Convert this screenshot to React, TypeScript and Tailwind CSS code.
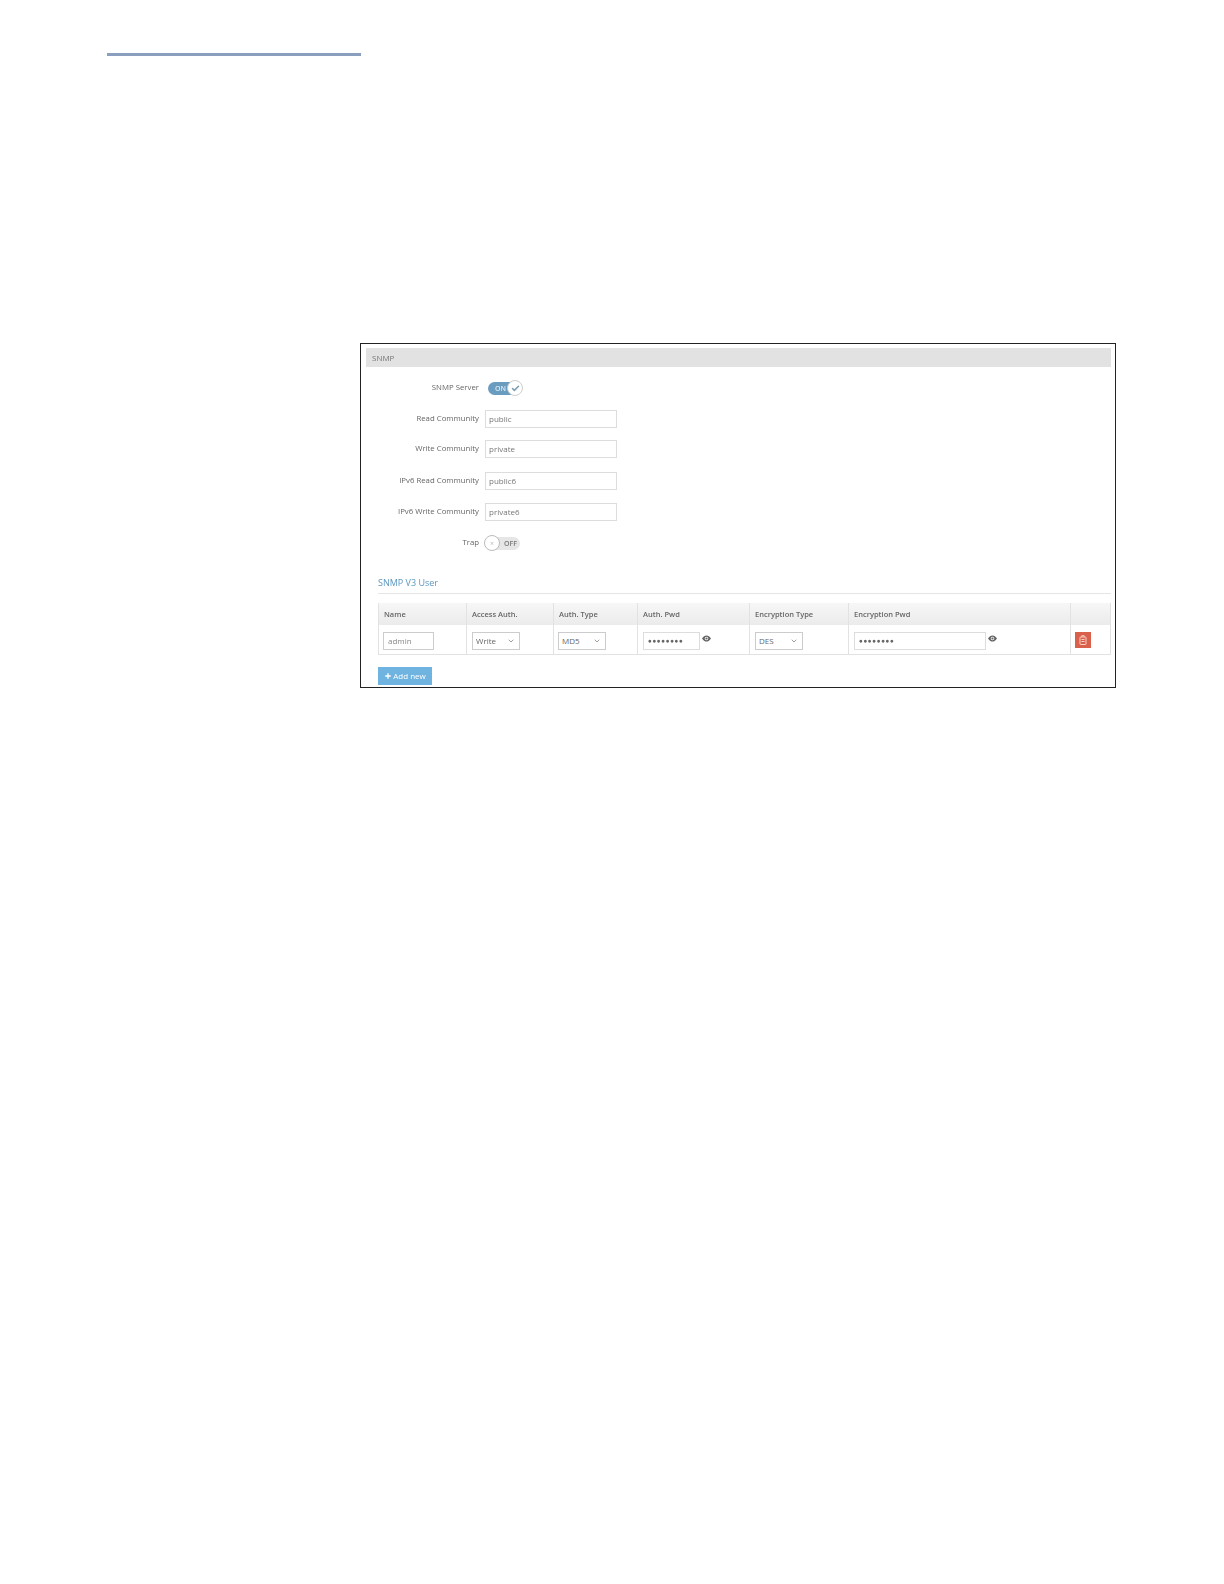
import { ChevronDown, Plus, Check } from "lucide-react";

const communityRows = [
  { label: "Read Community", value: "public", mt: "mt-[14px]" },
  { label: "Write Community", value: "private", mt: "mt-[12px]" },
  { label: "IPv6 Read Community", value: "public6", mt: "mt-[14px]" },
  { label: "IPv6 Write Community", value: "private6", mt: "mt-[13px]" },
];

const FormLabel = ({ children }: { children: string }) => (
  <span className="w-[113px] shrink-0 text-right text-[7.8px] leading-none text-[#666]">
    {children}
  </span>
);

const TableSelect = ({ value, shift }: { value: string; shift?: boolean }) => (
  <div className={`${shift ? "-ml-px" : ""} flex h-[18px] w-[48px] items-center justify-between border border-[#ccc] bg-white pl-[3px] pr-[4px] text-[8px] text-[#666]`}>
    {value}
    <ChevronDown size={8} strokeWidth={2.5} className="text-[#888]" />
  </div>
);

const Dots = () => (
  <span className="pl-[4px] text-[6.5px] tracking-[0.5px] text-[#666]">●●●●●●●●</span>
);

const EyeIcon = () => (
  <svg width="9" height="7" viewBox="0 0 18 14" className="ml-[2px] mt-[3px]">
    <path
      fill="#666"
      fillRule="evenodd"
      d="M0 7C2.5 2.8 5.6.8 9 .8s6.5 2 9 6.2c-2.5 4.2-5.6 6.2-9 6.2S2.500 11.200 0 7Zm9-3.600a3.600 3.600 0 1 0 0 7.200 3.600 3.600 0 0 0 0-7.200Z"
    />
    <circle cx="9" cy="7" r="2.200" fill="#666" />
  </svg>
);

const HeadCell = ({ width, children, last }: { width: string; children?: string; last?: boolean }) => (
  <div className={`${width} flex items-center pl-[5px] pt-[2px] text-[7.5px] font-semibold text-[#666] ${last ? "" : "border-r border-[#e2e2e2]"}`}>
    {children}
  </div>
);

const BodyCell = ({ width, children, last }: { width: string; children?: React.ReactNode; last?: boolean }) => (
  <div className={`${width} flex items-start pl-[5px] pt-[7px] ${last ? "" : "border-r border-[#e2e2e2]"}`}>
    {children}
  </div>
);

export default function App() {
  return (
    <div className="h-[1584px] w-full bg-white pl-[107px] pt-[53px] font-['Open_Sans',sans-serif]">
      <div className="h-[3px] w-[254px] bg-[#8a9fbd]" />
      <div className="ml-[253px] mt-[287px] h-[345px] w-[756px] border border-[#222] px-[5px] pt-[4px]">
        <div className="blur-[0.35px]">
          <div className="flex h-[19px] w-[745px] items-center bg-[#e2e2e2] pl-[6px] text-[8px] text-[#777]">
            SNMP
          </div>

          <div className="mt-[13px] flex h-[16px] items-center">
            <FormLabel>SNMP Server</FormLabel>
            <div className="relative ml-[9px] h-[13px] w-[34px] rounded-full bg-[#6a9cc0]">
              <span className="absolute left-[7px] top-[2px] text-[7px] font-semibold leading-[9px] text-[#dbe8f1]">ON</span>
              <div className="absolute -right-px -top-[1.5px] flex h-[16px] w-[16px] items-center justify-center rounded-full border border-[#ccc] bg-white">
                <Check size={9} strokeWidth={4} className="text-[#7d9bb2]" />
              </div>
            </div>
          </div>

          {communityRows.map(({ label, value, mt }) => (
            <div key={label} className={`${mt} flex h-[18px] items-center`}>
              <FormLabel>{label}</FormLabel>
              <div className="ml-[6px] flex h-[18px] w-[132px] items-center border border-[#ddd] bg-white pl-[3px] text-[8px] text-[#777]">
                {value}
              </div>
            </div>
          ))}

          <div className="mt-[14px] flex h-[16px] items-center">
            <FormLabel>Trap</FormLabel>
            <div className="relative ml-[6px] h-[13px] w-[35px] rounded-full bg-[#e6e6e6]">
              <span className="absolute right-[3px] top-[2px] text-[7px] font-semibold leading-[9px] text-[#777]">OFF</span>
              <div className="absolute -left-px -top-[1.5px] flex h-[16px] w-[16px] items-center justify-center rounded-full border border-[#bbb] bg-white">
                <span className="text-[7px] leading-none text-[#bbb]">×</span>
              </div>
            </div>
          </div>

          <div className="ml-[12px] mt-[25px] w-[733px] border-b border-[#e5e5e5] pb-[4px] text-[9px] leading-[13px] text-[#5a97c0]">
            SNMP V3 User
          </div>

          <div className="ml-[12px] mt-[9px] w-[733px] border-x border-b border-[#e2e2e2]">
            <div className="flex h-[22px] bg-gradient-to-b from-[#f7f7f7] to-[#ebebeb]">
              <HeadCell width="w-[88px]">Name</HeadCell>
              <HeadCell width="w-[87px]">Access Auth.</HeadCell>
              <HeadCell width="w-[84px]">Auth. Type</HeadCell>
              <HeadCell width="w-[112px]">Auth. Pwd</HeadCell>
              <HeadCell width="w-[99px]">Encryption Type</HeadCell>
              <HeadCell width="w-[222px]">Encryption Pwd</HeadCell>
              <HeadCell width="w-[39px]" last />
            </div>
            <div className="flex h-[29px]">
              <BodyCell width="w-[88px]">
                <div className="-ml-px flex h-[18px] w-[51px] items-center border border-[#ccc] pl-[4px] text-[8px] text-[#888]">admin</div>
              </BodyCell>
              <BodyCell width="w-[87px]"><TableSelect value="Write" /></BodyCell>
              <BodyCell width="w-[84px]"><TableSelect value="MD5" shift /></BodyCell>
              <BodyCell width="w-[112px]">
                <div className="flex h-[18px] w-[57px] items-center border border-[#ddd]"><Dots /></div>
                <EyeIcon />
              </BodyCell>
              <BodyCell width="w-[99px]"><TableSelect value="DES" /></BodyCell>
              <BodyCell width="w-[222px]">
                <div className="flex h-[18px] w-[132px] items-center border border-[#ddd]"><Dots /></div>
                <EyeIcon />
              </BodyCell>
              <BodyCell width="w-[39px]" last>
                <div className="-ml-px flex h-[16px] w-[16px] items-center justify-center bg-[#d9604a]">
                  <svg width="8" height="10" viewBox="0 0 8 10" fill="none" stroke="#f6cfc6" strokeWidth="1">
                    <rect x="1" y="2" width="6" height="7.5" rx="0.5" />
                    <path d="M2.800 2V0.700H5.200V2M2.500 4.500H5.500M2.500 6.500H5.500" />
                  </svg>
                </div>
              </BodyCell>
            </div>
          </div>

          <div className="ml-[12px] mt-[12px] flex h-[18px] w-[54px] items-center justify-center gap-[1px] bg-[#6fb3e0] text-[8px] text-white">
            <Plus size={8} strokeWidth={4} />
            Add new
          </div>
        </div>
      </div>
    </div>
  );
}
